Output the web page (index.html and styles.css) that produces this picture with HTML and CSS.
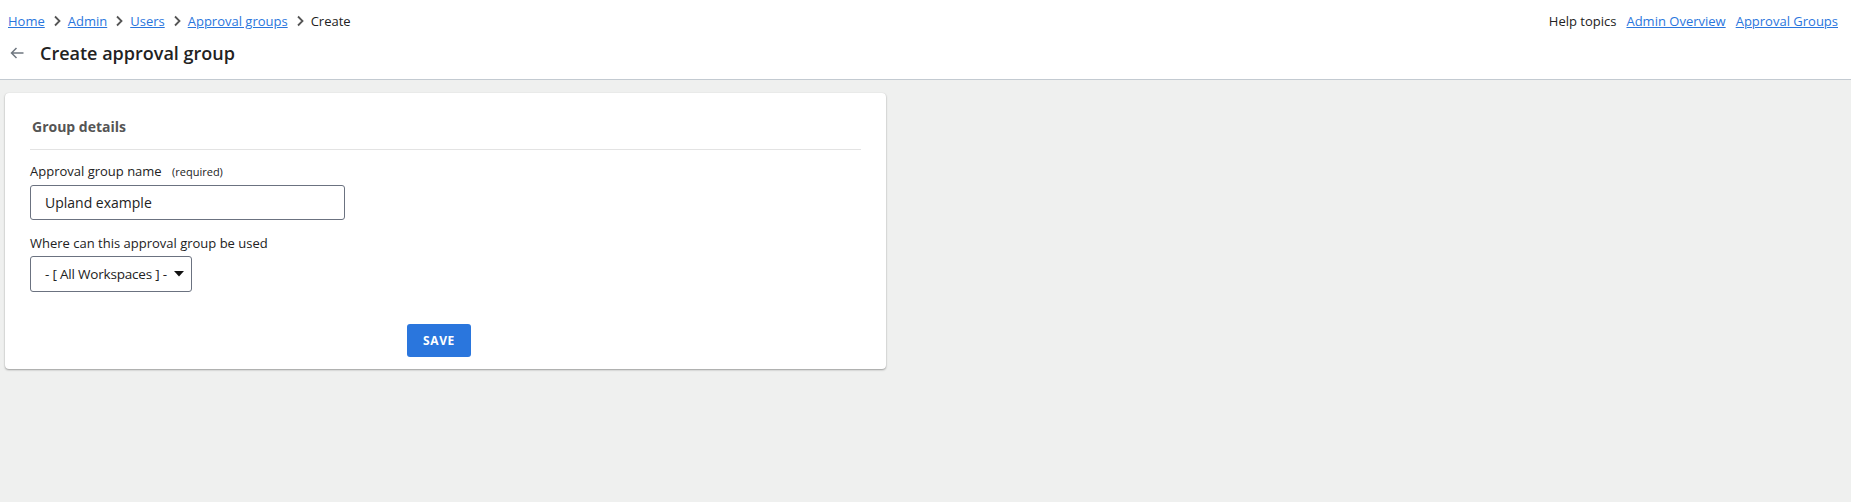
FILE: index.html
```html
<!DOCTYPE html>
<html>
<head>
<meta charset="utf-8">
<link rel="stylesheet" href="styles.css">
</head>
<body>
<header class="header">
  <div class="topbar">
    <nav class="crumbs">
      <a href="#">Home</a>
      <svg class="chev" viewBox="0 0 10 12"><path d="M3 1.5 L7.5 6 L3 10.5" fill="none" stroke="#555" stroke-width="1.8"/></svg>
      <a href="#">Admin</a>
      <svg class="chev" viewBox="0 0 10 12"><path d="M3 1.5 L7.5 6 L3 10.5" fill="none" stroke="#555" stroke-width="1.8"/></svg>
      <a href="#">Users</a>
      <svg class="chev" viewBox="0 0 10 12"><path d="M3 1.5 L7.5 6 L3 10.5" fill="none" stroke="#555" stroke-width="1.8"/></svg>
      <a href="#">Approval groups</a>
      <svg class="chev" viewBox="0 0 10 12"><path d="M3 1.5 L7.5 6 L3 10.5" fill="none" stroke="#555" stroke-width="1.8"/></svg>
      <span class="current">Create</span>
    </nav>
    <div class="help">
      <span class="help-label">Help topics</span>
      <a href="#">Admin Overview</a>
      <a href="#">Approval Groups</a>
    </div>
  </div>
  <div class="titlebar">
    <svg class="back" viewBox="0 0 16 16"><path d="M14.5 8 H2.5 M7.5 3 L2.5 8 L7.5 13" fill="none" stroke="#6f7780" stroke-width="1.5"/></svg>
    <h1 class="title">Create approval group</h1>
  </div>
</header>
<main class="main">
  <section class="card">
    <h2 class="card-title">Group details</h2>
    <div class="field">
      <label class="label">Approval group name <span class="req">(required)</span></label>
      <div class="input">Upland example</div>
    </div>
    <div class="field field-2">
      <label class="label">Where can this approval group be used</label>
      <div class="select"><span>- [ All Workspaces ] -</span><svg class="caret" viewBox="0 0 10 6"><path d="M0 0 H10 L5 5.5 Z" fill="#111"/></svg></div>
    </div>
    <div class="actions">
      <button class="btn">SAVE</button>
    </div>
  </section>
</main>
</body>
</html>
```
FILE: styles.css
```css
html, body {
  margin: 0;
  padding: 0;
}
body {
  background: #eff0ef;
  font-family: "Open Sans", "Noto Sans", sans-serif;
  color: #222;
  height: 502px;
}
.header {
  background: #fff;
  height: 80px;
  border-bottom: 1px solid #c3cad1;
  box-sizing: border-box;
}
.topbar {
  display: flex;
  justify-content: space-between;
  align-items: center;
  padding: 11px 13px 0 8px;
  height: 20px;
  font-size: 13px;
}
.crumbs {
  display: flex;
  align-items: center;
}
.crumbs a, .help a {
  color: #2a76dd;
  text-decoration: underline;
}
.chev {
  width: 10px;
  height: 12px;
  margin: 0 6px 0 7px;
}
.current {
  color: #222;
}
.help {
  display: flex;
  gap: 10px;
  align-items: center;
}
.help-label {
  color: #222;
}
.titlebar {
  display: flex;
  align-items: center;
  padding: 10px 0 0 9px;
}
.back {
  width: 16px;
  height: 16px;
  margin-right: 15px;
}
.title {
  margin: 0;
  font-size: 18px;
  font-weight: 600;
  color: #222;
  line-height: 24px;
}
.main {
  padding: 13px 0 0 5px;
}
.card {
  width: 881px;
  height: 276px;
  box-sizing: border-box;
  background: #fff;
  border-radius: 4px;
  box-shadow: 0 1px 2px rgba(0,0,0,0.35), 0 0 1px rgba(0,0,0,0.1);
  padding: 24px 25px 0 25px;
}
.card-title {
  margin: 0;
  font-size: 14px;
  font-weight: 700;
  color: #555;
  line-height: 20px;
  padding-bottom: 12px;
  padding-left: 2px;
  border-bottom: 1px solid #e3e3e3;
}
.field {
  margin-top: 12px;
}
.field-2 {
  margin-top: 14px;
}
.label {
  display: block;
  font-size: 13px;
  color: #222;
  line-height: 18px;
  margin-bottom: 4px;
}
.req {
  font-size: 11px;
  margin-left: 7px;
}
.input {
  width: 315px;
  height: 35px;
  box-sizing: border-box;
  border: 1px solid #6b7280;
  border-radius: 3px;
  padding: 0 14px;
  display: flex;
  align-items: center;
  font-size: 14px;
  color: #222;
}
.select {
  width: 162px;
  height: 36px;
  box-sizing: border-box;
  border: 1px solid #6b7280;
  border-radius: 3px;
  padding: 0 0 0 14px;
  display: flex;
  align-items: center;
  font-size: 13.5px;
  color: #222;
  gap: 7px;
  white-space: nowrap;
  letter-spacing: -0.2px;
}
.caret {
  width: 10px;
  height: 6px;
  flex: none;
}
.actions {
  display: flex;
  justify-content: center;
  padding-right: 13px;
  margin-top: 32px;
}
.btn {
  width: 64px;
  height: 33px;
  border: none;
  border-radius: 3px;
  background: #2a76dd;
  color: #fff;
  font-family: "Open Sans", "Noto Sans", sans-serif;
  font-weight: 700;
  font-size: 12px;
  letter-spacing: 0.6px;
  padding: 0;
}
```
